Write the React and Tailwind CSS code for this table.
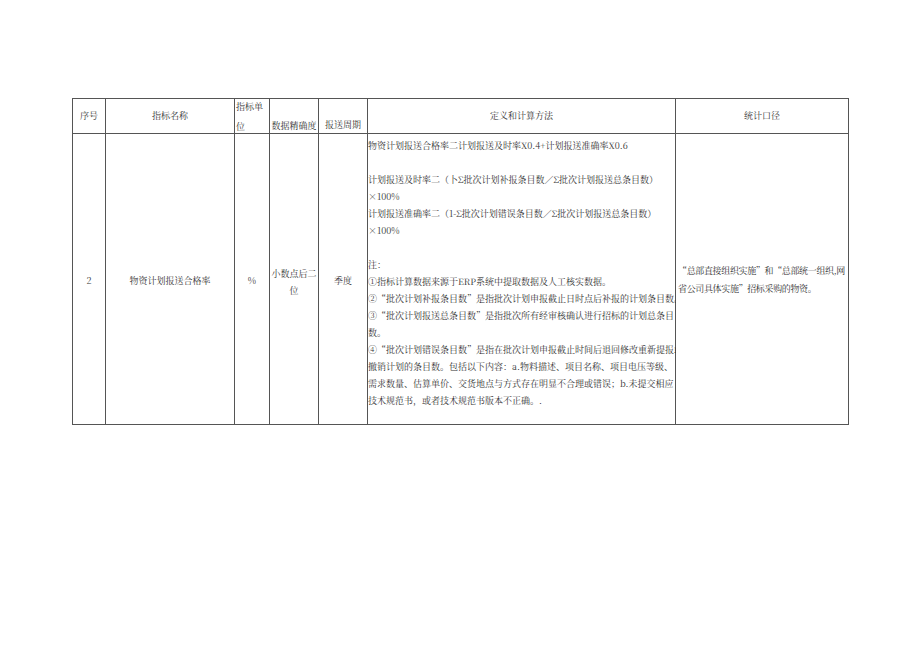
import React from "react";

const font = {
  fontFamily: '"Noto Serif CJK SC","Noto Sans CJK SC","Liberation Serif",serif',
};

const defLines = [
  "物资计划报送合格率二计划报送及时率X0.4+计划报送准确率X0.6",
  "",
  "计划报送及时率二（卜Σ批次计划补报条目数／Σ批次计划报送总条目数）",
  "×100%",
  "计划报送准确率二（1-Σ批次计划错误条目数／Σ批次计划报送总条目数）",
  "×100%",
  "",
  "注：",
  "①指标计算数据来源于ERP系统中提取数据及人工核实数据。",
  "②“批次计划补报条目数”是指批次计划申报截止日时点后补报的计划条目数。",
  "③“批次计划报送总条目数”是指批次所有经审核确认进行招标的计划总条目",
  "数。",
  "④“批次计划错误条目数”是指在批次计划申报截止时间后退回修改重新提报或",
  "撤销计划的条目数。包括以下内容：a.物料描述、项目名称、项目电压等级、",
  "需求数量、估算单价、交货地点与方式存在明显不合理或错误；b.未提交相应",
  "技术规范书，或者技术规范书版本不正确。.",
];

export default function App() {
  return (
    <div
      lang="zh-CN"
      className="w-[920px] h-[651px] bg-white pt-[98px] pl-[72px] text-[9px] text-[#333]"
      style={font}
    >
      <div className="w-[777px] grid grid-cols-[32px_128px_34px_48px_48px_307px_172px] grid-rows-[34px_290px] gap-px p-px bg-[#555]">
        {/* header */}
        <div className="bg-white flex items-center justify-center">序号</div>
        <div className="bg-white flex items-center justify-center">指标名称</div>
        <div className="bg-white flex flex-col pl-[1px]">
          <div className="leading-[12px] mt-[2px]">指标单</div>
          <div className="leading-[12px] mt-[8px]">位</div>
        </div>
        <div className="bg-white flex items-end justify-center pb-[1px]">
          <div className="leading-[12px] whitespace-nowrap">数据精确度</div>
        </div>
        <div className="bg-white flex items-end justify-center pb-[2px]">
          <div className="leading-[12px] whitespace-nowrap">报送周期</div>
        </div>
        <div className="bg-white flex items-center justify-center">定义和计算方法</div>
        <div className="bg-white flex items-center justify-center">统计口径</div>

        {/* body */}
        <div className="bg-white flex items-center justify-center pt-[3px]">2</div>
        <div className="bg-white flex items-center justify-center pt-[3px]">物资计划报送合格率</div>
        <div className="bg-white flex items-center justify-center pt-[3px]">%</div>
        <div className="bg-white flex flex-col items-center justify-center pt-[5px] leading-[17px]">
          <div className="whitespace-nowrap">小数点后二</div>
          <div>位</div>
        </div>
        <div className="bg-white flex items-center justify-center pt-[3px]">季度</div>
        <div className="bg-white flex flex-col pt-[3px] leading-[17px]">
          {defLines.map((l, i) => (
            <div key={i} className="whitespace-nowrap h-[17px]">
              {l}
            </div>
          ))}
        </div>
        <div className="bg-white flex flex-col justify-center pl-[2px] pt-[2px] leading-[18px] tracking-[-0.35px]">
          <div className="whitespace-nowrap">“总部直接组织实施”和“总部统一组织,网</div>
          <div className="whitespace-nowrap">省公司具体实施”招标采购的物资。</div>
        </div>
      </div>
    </div>
  );
}
